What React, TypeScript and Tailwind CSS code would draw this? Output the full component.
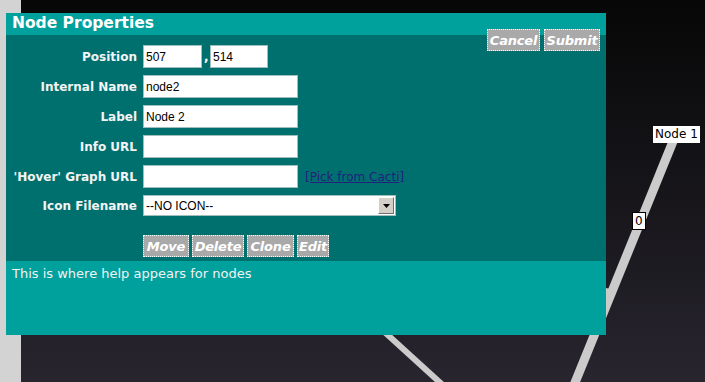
import React from "react";

const sans = { fontFamily: '"DejaVu Sans", Verdana, sans-serif' };

const labelCls = "text-right text-[12px] font-bold leading-none text-[#f4f4f4]";
const inputCls =
  "h-[23px] border border-[#9fbfbf] bg-white px-[2px] text-[12px] text-black outline-none [font-family:'Liberation_Sans',Arial,sans-serif]";
const btnCls =
  "flex h-[22px] items-center justify-center border border-dotted border-white bg-[#a9a9a9] text-[13px] font-bold italic leading-none tracking-[-0.2px] text-white";

function FormRow({ label, children }: { label: string; children: React.ReactNode }) {
  return (
    <>
      <div className={labelCls}>{label}</div>
      <div className="flex items-center">{children}</div>
    </>
  );
}

function MapCanvas() {
  return (
    <div className="relative flex-1 bg-linear-to-b from-[#070707] to-[#28252f]">
      <svg className="absolute inset-0" width="684" height="382" viewBox="21 0 684 382">
        <line x1="676" y1="134" x2="572" y2="390" stroke="#cbcbcb" strokeWidth="9" />
        <polygon points="606,288 615,290 606,305" fill="#cbcbcb" />
        <line x1="300" y1="255" x2="446" y2="388" stroke="#cbcbcb" strokeWidth="6" />
      </svg>
      <div className="absolute left-[632px] top-[126px] bg-white px-[2px] text-[12px] leading-[17px] text-black" style={sans}>
        Node 1
      </div>
      <div className="absolute left-[611px] top-[212px] border border-black bg-white px-[2px] text-[12px] leading-[16px] text-black" style={sans}>
        0
      </div>
    </div>
  );
}

export default function App() {
  return (
    <div className="relative flex h-[382px] w-[705px] overflow-hidden" style={sans}>
      <div className="w-[21px] bg-[#d3d3d3]" />
      <MapCanvas />

      <div className="absolute left-[6px] top-[13px] w-[600px]">
        <div className="flex h-[22px] items-center bg-[#00a09d] pl-[6px]">
          <span className="text-[15.5px] font-bold text-white">Node Properties</span>
        </div>

        <div className="h-[226px] bg-[#00706f] pt-[10px]">
          <div className="grid grid-cols-[131px_1fr] items-center gap-x-[6px] gap-y-[7px]">
            <FormRow label="Position">
              <input readOnly value="507" className={`${inputCls} w-[59px]`} />
              <span className="w-[8px] pl-[2px] text-[12px] font-bold text-white">,</span>
              <input readOnly value="514" className={`${inputCls} w-[58px]`} />
            </FormRow>
            <FormRow label="Internal Name">
              <input readOnly value="node2" className={`${inputCls} w-[155px]`} />
            </FormRow>
            <FormRow label="Label">
              <input readOnly value="Node 2" className={`${inputCls} w-[155px]`} />
            </FormRow>
            <FormRow label="Info URL">
              <input readOnly value="" className={`${inputCls} w-[155px]`} />
            </FormRow>
            <FormRow label="'Hover' Graph URL">
              <input readOnly value="" className={`${inputCls} w-[155px]`} />
              <a className="ml-[7px] text-[12px] text-[#20207e] underline">[Pick from Cacti]</a>
            </FormRow>
            <FormRow label="Icon Filename">
              <div className="flex h-[21px] w-[253px] items-center border border-[#9fbfbf] bg-white pl-[2px] text-[12px] text-black [font-family:'Liberation_Sans',Arial,sans-serif]">
                <span className="flex-1">--NO ICON--</span>
                <span className="mr-[1px] flex h-[17px] w-[16px] items-center justify-center border border-t-white border-l-white border-r-[#707070] border-b-[#707070] bg-[#d4d0c8]">
                  <svg width="7" height="4" viewBox="0 0 7 4">
                    <polygon points="0,0 7,0 3.5,4" fill="#000" />
                  </svg>
                </span>
              </div>
            </FormRow>
          </div>

          <div className="ml-[137px] mt-[19px] flex gap-[3px]">
            <div className={`${btnCls} w-[46px]`}>Move</div>
            <div className={`${btnCls} w-[52px]`}>Delete</div>
            <div className={`${btnCls} w-[47px]`}>Clone</div>
            <div className={`${btnCls} w-[32px]`}>Edit</div>
          </div>
        </div>

        <div className="h-[74px] bg-[#00a09d] pl-[6px] pt-[5px] text-[13px] leading-[16px] text-[#f2f2f2]">
          This is where help appears for nodes
        </div>

        <div className="absolute right-[6px] top-[16px] flex gap-[4px]">
          <div className={`${btnCls} w-[53px]`}>Cancel</div>
          <div className={`${btnCls} w-[56px]`}>Submit</div>
        </div>
      </div>
    </div>
  );
}
